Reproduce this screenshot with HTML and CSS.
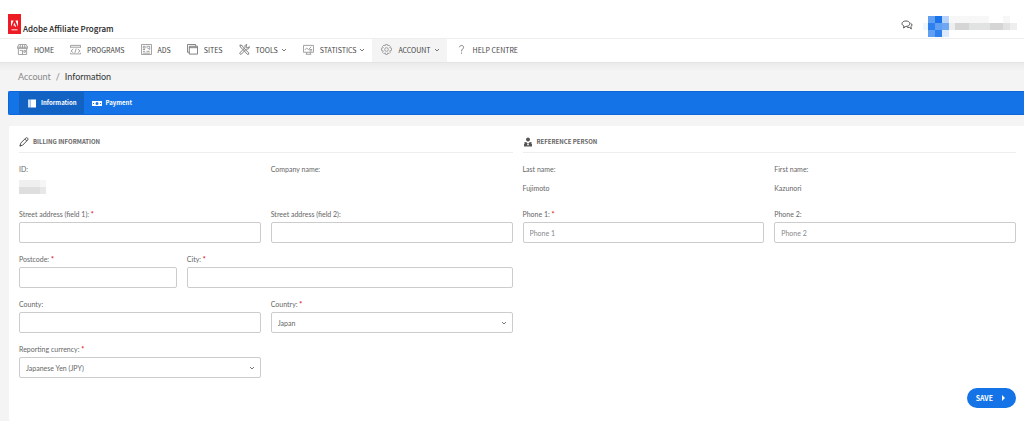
FILE: index.html
```html
<!DOCTYPE html>
<html lang="en">
<head>
<meta charset="utf-8">
<meta name="viewport" content="width=device-width, initial-scale=1">
<title>Adobe Affiliate Program</title>
<link rel="stylesheet" href="styles.css">
</head>
<body>
<header class="topbar">
  <a class="brand" href="#">
    <svg class="brand-logo" viewBox="0 0 13 20" aria-hidden="true"><path fill="#ed1c24" d="M0 0h13v20H0z"/><path fill="#fff" d="M3 6.500h2.600L3 12.800zM7.400 6.500H10v6.300zM6.500 8.800l1.700 4H7l-.5-1.200H5.300z"/><path fill="#f9a5a8" d="M3.500 15h6v1.500h-6z"/></svg>
    <span class="brand-name">Adobe Affiliate Program</span>
  </a>
  <div class="user">
    <button class="chat" type="button" aria-label="Messages">
      <svg viewBox="0 0 12 10" fill="none" stroke="#555"><path d="M2.500 8l.6-2C1.500 5.400 1 4.600 1 3.700 1 2 2.700 1 4.900 1s3.900 1 3.900 2.700-1.700 2.700-3.900 2.700z"/><path d="M9.500 3.200c2 .8 1.900 2.700.3 3.500l.6 2.200-2-1.500c-1 .1-1.900 0-2.500-.4"/></svg>
    </button>
    <svg class="account-badge" viewBox="0 0 96 21" shape-rendering="crispEdges" aria-hidden="true">
      <path fill="#eff7fe" d="M0 7h5v7H0z"/>
      <path fill="#619ff3" d="M5 0h7v7H5zM12 7h7v7h-7zM5 14h7v7H5z"/>
      <path fill="#1a73e8" d="M12 0h7v7h-7z"/><path fill="#b7d3fa" d="M19 0h7v7h-7z"/>
      <path fill="#2f80ef" d="M5 7h7v7H5zM12 14h7v7h-7z"/><path fill="#6ea8f5" d="M19 7h7v7h-7z"/><path fill="#dce9fc" d="M19 14h7v7h-7z"/>
      <path fill="#f7f7f7" d="M27 0h39v7H27zM80 0h7v7h-7z"/><path fill="#eee" d="M26 7h6v7h-6zM87 7h7v7h-7z"/>
      <path fill="#d5d5d5" d="M32 7h14v7H32zM67 7h13v7H67z"/><path fill="#e1e3e3" d="M46 7h21v7H46zM80 7h7v7h-7z"/>
    </svg>
  </div>
</header>

<nav class="mainnav" aria-label="Main">
  <a class="nav-item" href="#"><svg class="nav-icon" viewBox="0 0 12 12"><path d="M2 .5h8l1.500 3v1.300h-11V3.500zM1.500 5v6.500h9V5M.5 3.500h11M3.500 1v3.500M6 1v3.500M8.500 1v3.500M3 7h3v4M7.500 7h1.700v2H7.500z"/></svg>HOME</a>
  <a class="nav-item" href="#"><svg class="nav-icon" viewBox="0 0 12 12"><path d="M.5 4V1.500h11V4M.5 3.500h11M3.500 5.500l-2.500 2 2.500 2M8.500 5.500l2.500 2-2.500 2M6.800 5l-1.600 5M.5 9.500v1.300h11V9.500"/></svg>PROGRAMS</a>
  <a class="nav-item" href="#"><svg class="nav-icon" viewBox="0 0 12 12"><path d="M.5.5h11v11H.5zM2.500 2.500h2v2h-2zM6 2.500h3.500V6L6 3.500M2 6h2.500M2 8h2.500M2 10h8M6 8h3.500"/></svg>ADS</a>
  <a class="nav-item" href="#"><svg class="nav-icon dark" viewBox="0 0 12 12"><path d="M2.500 2.500h9v8.500h-9zM2.500 4h9M2.500 9H.5V.5h9v2"/></svg>SITES</a>
  <a class="nav-item" href="#"><svg class="nav-icon dark" viewBox="0 0 12 12"><path d="M1 1l2.500.7 1 2L10.500 9.500v1.700H9L3.500 5 1.500 3.500zM8.500.5C6.500.8 6 2.400 6.700 3.900L1 9.500c-.7 1 .6 2.300 1.600 1.600L8 5.500c2 .6 3.500-.8 3.300-2.700L9.800 4.200 8 3.800 7.900 2.300z"/></svg>TOOLS<svg class="chevron" viewBox="0 0 6 4"><path d="M1 1l2 2 2-2"/></svg></a>
  <a class="nav-item" href="#"><svg class="nav-icon" viewBox="0 0 12 12"><path d="M.5 1.500h11v7.500H.5zM2 6.500l2-2 2 1.500 3-3M7 7.500h3M7 6h3M4 9v2M8 9v2M3 11.200h6"/></svg>STATISTICS<svg class="chevron" viewBox="0 0 6 4"><path d="M1 1l2 2 2-2"/></svg></a>
  <a class="nav-item active" href="#" aria-current="page"><svg class="nav-icon" viewBox="0 0 12 12"><path d="M5 .5h2l.4 1.400 1.300-.7 1.500 1.500-.7 1.300 2 .5v2.500l-2 .5.7 1.500-1.500 1.500-1.400-.8-.4 1.800H5l-.4-1.800-1.400.8-1.500-1.500.7-1.500-1.900-.5V4.500l2-.5-.8-1.300 1.500-1.500 1.400.7z"/><circle cx="6" cy="6" r="2"/></svg>ACCOUNT<svg class="chevron" viewBox="0 0 6 4"><path d="M1 1l2 2 2-2"/></svg></a>
  <a class="nav-item" href="#"><svg class="nav-icon dark" viewBox="0 0 12 12"><path d="M3.800 3.500C4 1 8.300 1 8.300 3.600 8.300 5.400 6 5.500 6 8M6 9.300v1.400"/></svg>HELP CENTRE</a>
</nav>

<main class="page">
  <nav class="crumbs" aria-label="Breadcrumb"><a href="#">Account</a><span class="slash">/</span><span class="current">Information</span></nav>

  <nav class="tabs" aria-label="Account sections">
    <a class="tab active" href="#" aria-current="page"><svg viewBox="0 0 10 9"><path fill="#fff" d="M3.500.5H9v8H3.500z"/><path fill="#c9dcfa" d="M1 .5h2.500v8H1z"/></svg>Information</a>
    <a class="tab" href="#"><svg viewBox="0 0 10 9"><path fill="#fff" fill-rule="evenodd" d="M0 2h10v5H0zM5 3a1.500 1.500 0 100 3 1.500 1.500 0 000-3zM1 4v1h1V4zM8 4v1h1V4z"/></svg>Payment</a>
  </nav>

  <form class="card">
    <div class="columns">
      <section class="group">
        <h2 class="heading"><svg viewBox="0 0 10 10"><path fill="none" stroke="#555" d="M1 9l.7-2.800L6.800 1c1.200-1 2.900.6 2 1.900L3.600 8.200zM5.800 2l2 2"/><path fill="#555" d="M.5 9.500L1.300 7l1.600 1.700z"/></svg>BILLING INFORMATION</h2>
        <div class="fields">
          <div class="field half"><span class="label">ID:</span>
            <svg class="masked" viewBox="0 0 27 14" shape-rendering="crispEdges" aria-hidden="true"><path fill="#efefef" d="M0 0h21v7H0z"/><path fill="#f6f6f6" d="M21 0h6v7h-6z"/><path fill="#dedede" d="M0 7h21v7H0z"/><path fill="#e8e8e8" d="M21 7h6v7h-6z"/></svg></div>
          <div class="field half"><span class="label">Company name:</span></div>
          <div class="field half"><label class="label" for="street1">Street address (field 1): <b>*</b></label><input class="control" id="street1" type="text" required></div>
          <div class="field half"><label class="label" for="street2">Street address (field 2):</label><input class="control" id="street2" type="text"></div>
          <div class="field third"><label class="label" for="postcode">Postcode: <b>*</b></label><input class="control" id="postcode" type="text" required></div>
          <div class="field two-thirds"><label class="label" for="city">City: <b>*</b></label><input class="control" id="city" type="text" required></div>
          <div class="field half"><label class="label" for="county">County:</label><input class="control" id="county" type="text"></div>
          <div class="field half"><label class="label" for="country">Country: <b>*</b></label>
            <div class="select"><select class="control" id="country"><option>Japan</option></select><svg class="chevron" viewBox="0 0 6 4"><path d="M1 1l2 2 2-2"/></svg></div></div>
          <div class="field half"><label class="label" for="currency">Reporting currency: <b>*</b></label>
            <div class="select"><select class="control" id="currency"><option>Japanese Yen (JPY)</option></select><svg class="chevron" viewBox="0 0 6 4"><path d="M1 1l2 2 2-2"/></svg></div></div>
        </div>
      </section>
      <section class="group">
        <h2 class="heading"><svg viewBox="0 0 10 10"><circle cx="5" cy="2.500" r="2" fill="#555"/><path fill="#555" fill-rule="evenodd" d="M1.500 5l2 .3L5 7l1.500-1.700L8.500 5v2H9v2.500H1V7h.5zM4 7.300h2v1H4z"/></svg>REFERENCE PERSON</h2>
        <div class="fields">
          <div class="field half"><span class="label">Last name:</span><span class="value">Fujimoto</span></div>
          <div class="field half"><span class="label">First name:</span><span class="value">Kazunori</span></div>
          <div class="field half"><label class="label" for="phone1">Phone 1: <b>*</b></label><input class="control" id="phone1" type="tel" placeholder="Phone 1" required></div>
          <div class="field half"><label class="label" for="phone2">Phone 2:</label><input class="control" id="phone2" type="tel" placeholder="Phone 2"></div>
        </div>
      </section>
    </div>
    <div class="actions"><button class="save" type="submit">SAVE<svg viewBox="0 0 4 6"><path fill="#fff" d="M1 0l3 3-3 3z"/></svg></button></div>
  </form>
</main>
</body>
</html>
```
FILE: styles.css
```css
:root {
  --text: Lato, "Open Sans", sans-serif;
  --display: "Noto Sans CJK JP", "Open Sans", sans-serif;
}

* { box-sizing: border-box; }

body {
  margin: 0;
  background: #fff;
  color: #666;
  font: 7px/14px var(--text);
}

a { color: inherit; text-decoration: none; }
svg { display: block; flex: none; }
button, input, select { font: inherit; color: inherit; }

.topbar {
  display: flex;
  align-items: flex-end;
  justify-content: space-between;
  height: 38px;
  padding: 0 5px 0 8px;
}

.brand {
  display: flex;
  align-items: flex-end;
  gap: 2px;
  padding-bottom: 4px;
}
.brand-logo { width: 13px; height: 20px; }
.brand-name {
  color: #222;
  font: 500 8px/10px var(--display);
}

.user { display: flex; align-items: flex-start; gap: 10px; height: 22px; }
.chat { margin: 4px 0 0; padding: 0; border: 0; background: none; }
.chat svg { width: 12px; height: 10px; }
.account-badge { width: 96px; height: 21px; }

.mainnav {
  display: flex;
  height: 25px;
  padding-left: 8px;
  border-top: 1px solid #eee;
  border-bottom: 1px solid #e4e4e4;
  color: #444;
  font-family: var(--display);
}
.nav-item {
  display: flex;
  align-items: center;
  gap: 6px;
  padding: 0 7px 2px 9px;
}
.nav-item.active { background: #f4f4f4; }
.nav-icon { width: 11px; height: 11px; fill: none; stroke: #999; }
.nav-icon.dark { stroke: #777; }
.chevron { width: 6px; height: 4px; fill: none; stroke: #777; }
.nav-item .chevron { margin-left: -3px; }

.page {
  padding-left: 8px;
  background: linear-gradient(#ebebeb, #f4f4f4 8px);
}

.crumbs {
  display: flex;
  gap: 5px;
  padding: 7px 10px 7px;
  color: #888;
  font-size: 9px;
}
.crumbs .current { color: #333; }

.tabs {
  display: flex;
  height: 24px;
  padding-left: 10px;
  border: 1px solid #0f66d8;
  border-right: 0;
  border-radius: 2px 0 0 2px;
  background: #1473e6;
  color: #fff;
  font: 700 6px/14px var(--display);
}
.tab { display: flex; align-items: center; gap: 4px; padding: 0 7px 0 8px; }
.tab.active { background: #1262c4; }
.tab svg { width: 10px; height: 9px; }

.card {
  margin: 11px 0 0 1px;
  padding: 5px 8px 13px 10px;
  border-radius: 2px 0 0 2px;
  background: #fff;
}
.columns { display: grid; grid-template-columns: 1fr 1fr; gap: 10px; }
.heading {
  display: flex;
  align-items: center;
  gap: 4px;
  height: 22px;
  margin: 0 0 9px;
  border-bottom: 1px solid #eee;
  font: 700 6px/14px var(--display);
}
.heading svg { width: 10px; height: 10px; }

.fields { display: grid; grid-template-columns: repeat(6, 1fr); column-gap: 10px; }
.field { display: flex; flex-direction: column; gap: 1px; min-width: 0; min-height: 45px; }
.half { grid-column: span 3; }
.third { grid-column: span 2; }
.two-thirds { grid-column: span 4; }
.label b { color: #e02020; }
.value { padding-top: 4px; }
.masked { width: 27px; height: 14px; margin-top: 3px; }

.control {
  width: 100%;
  height: 21px;
  padding: 0 6px;
  border: 1px solid #ccc;
  border-radius: 2px;
  background: #fff;
}
.control::placeholder { color: #888; opacity: 1; }
.select { display: grid; align-items: center; }
.select > * { grid-area: 1 / 1; }
.select .control { appearance: none; }
.select .chevron { justify-self: end; margin-right: 6px; pointer-events: none; }

.actions { display: flex; justify-content: flex-end; padding-top: 1px; }
.save {
  display: flex;
  align-items: center;
  gap: 8px;
  height: 20px;
  padding: 0 11px 0 9px;
  border: 0;
  border-radius: 10px;
  background: #1473e6;
  color: #fff;
  font: 700 7px/14px var(--display);
}
.save svg { width: 4px; height: 6px; }
```
